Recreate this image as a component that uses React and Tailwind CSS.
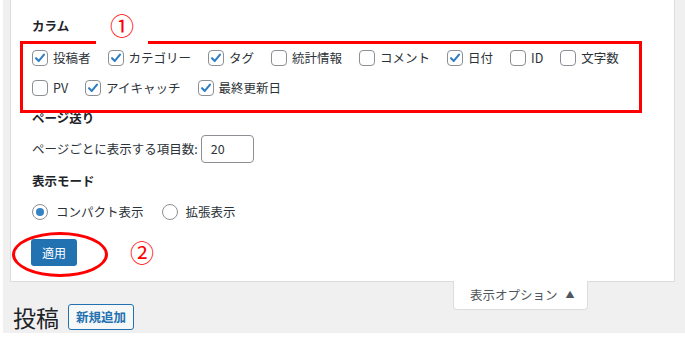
import React from "react";

const font = { fontFamily: '"Noto Sans CJK JP", "Noto Sans", sans-serif' };

const columns = [
  [
    { label: "投稿者", checked: true },
    { label: "カテゴリー", checked: true },
    { label: "タグ", checked: true },
    { label: "統計情報", checked: false },
    { label: "コメント", checked: false },
    { label: "日付", checked: true },
    { label: "ID", checked: false },
    { label: "文字数", checked: false },
  ],
  [
    { label: "PV", checked: false },
    { label: "アイキャッチ", checked: true },
    { label: "最終更新日", checked: true },
  ],
];

function Checkbox({ checked }) {
  return (
    <span className="w-4 h-4 shrink-0 rounded-[4px] border border-[#8c8f94] bg-white flex items-center justify-center">
      {checked && (
        <svg width="14" height="14" viewBox="0 0 16 16" fill="none">
          <path d="M3.5 8.2 L6.6 11.3 L12.6 4.2" stroke="#2f7ec4" strokeWidth="2.4" strokeLinecap="round" strokeLinejoin="round" />
        </svg>
      )}
    </span>
  );
}

function Radio({ checked }) {
  return (
    <span className="w-4 h-4 shrink-0 rounded-full border border-[#8c8f94] bg-white flex items-center justify-center">
      {checked && <span className="w-2 h-2 rounded-full bg-[#3582c4]" />}
    </span>
  );
}

export default function App() {
  return (
    <div className="relative w-[685px] h-[338px] bg-white overflow-hidden text-[12.5px] text-[#2c3338]" style={font}>
      <div className="ml-[3px] w-[682px] h-[333px] bg-[#f0f0f1] pl-[7px] pr-[10px]">
        {/* screen options panel */}
        <div className="h-[282px] bg-white border-x border-b border-[#dcdcde] pl-[21px] flex flex-col">
          <div className="mt-[16px] h-[20px] leading-[20px] font-bold text-[#1d2327]">カラム</div>

          <div className="mt-[7px]">
            {columns.map((row, i) => (
              <div key={i} className="h-[30px] flex items-center gap-x-[17px]">
                {row.map((c) => (
                  <label key={c.label} className="flex items-center gap-[5px] whitespace-nowrap">
                    <Checkbox checked={c.checked} />
                    <span>{c.label}</span>
                  </label>
                ))}
              </div>
            ))}
          </div>

          <div className="mt-[5px] h-[20px] leading-[20px] font-bold text-[#1d2327]">ページ送り</div>

          <div className="mt-[7px] h-[28px] flex items-center">
            <span>ページごとに表示する項目数:</span>
            <span className="ml-[3px] w-[53px] h-[28px] rounded-[4px] border border-[#8c8f94] pl-[9px] flex items-center text-[#2c3338]">
              20
            </span>
          </div>

          <div className="mt-[8px] h-[20px] leading-[20px] font-bold text-[#1d2327]">表示モード</div>

          <div className="mt-[11px] h-[20px] flex items-center">
            <label className="flex items-center gap-[8px]">
              <Radio checked />
              <span>コンパクト表示</span>
            </label>
            <label className="ml-[18px] flex items-center gap-[8px]">
              <Radio checked={false} />
              <span>拡張表示</span>
            </label>
          </div>

          <div className="mt-[17px]">
            <button className="w-[46px] h-[27px] -ml-[1px] rounded-[3px] bg-[#2271b1] text-white text-[12px] flex items-center justify-center">
              適用
            </button>
          </div>
        </div>

        {/* heading row with tab */}
        <div className="flex items-start">
          <div className="mt-[20px] ml-[3px] flex items-center">
            <h1 className="text-[23px] leading-[30px] text-[#1d2327] font-normal">投稿</h1>
            <button className="ml-[9px] h-[26px] px-[7px] rounded-[3px] border border-[#2271b1] bg-[#f6f7f7] text-[#2271b1] text-[12.5px] font-bold flex items-center">
              新規追加
            </button>
          </div>
          <div className="ml-auto mr-[87px] -mt-px h-[29px] w-[135px] bg-white border-x border-b border-[#dcdcde] rounded-b-[4px] flex items-center pl-[16px] text-[#50575e] whitespace-nowrap">
            表示オプション
            <span className="ml-[8px] text-[9px]">▲</span>
          </div>
        </div>
      </div>

      {/* annotations */}
      <div className="absolute left-[20px] top-[41px] w-[622px] h-[72px] border-[3px] border-[#ff0000]" />
      <div className="absolute left-[96px] top-[12px] w-[52px] h-[34px] bg-white flex items-start justify-center">
        <span className="text-[24px] leading-[28px] text-[#ff0000] mt-[-1px]">①</span>
      </div>
      <div className="absolute left-[12px] top-[232px] w-[96px] h-[45px] rounded-[50%] border-[3px] border-[#ff0000]" />
      <div className="absolute left-[130px] top-[238px] text-[24px] leading-[28px] text-[#ff0000]">②</div>
    </div>
  );
}
